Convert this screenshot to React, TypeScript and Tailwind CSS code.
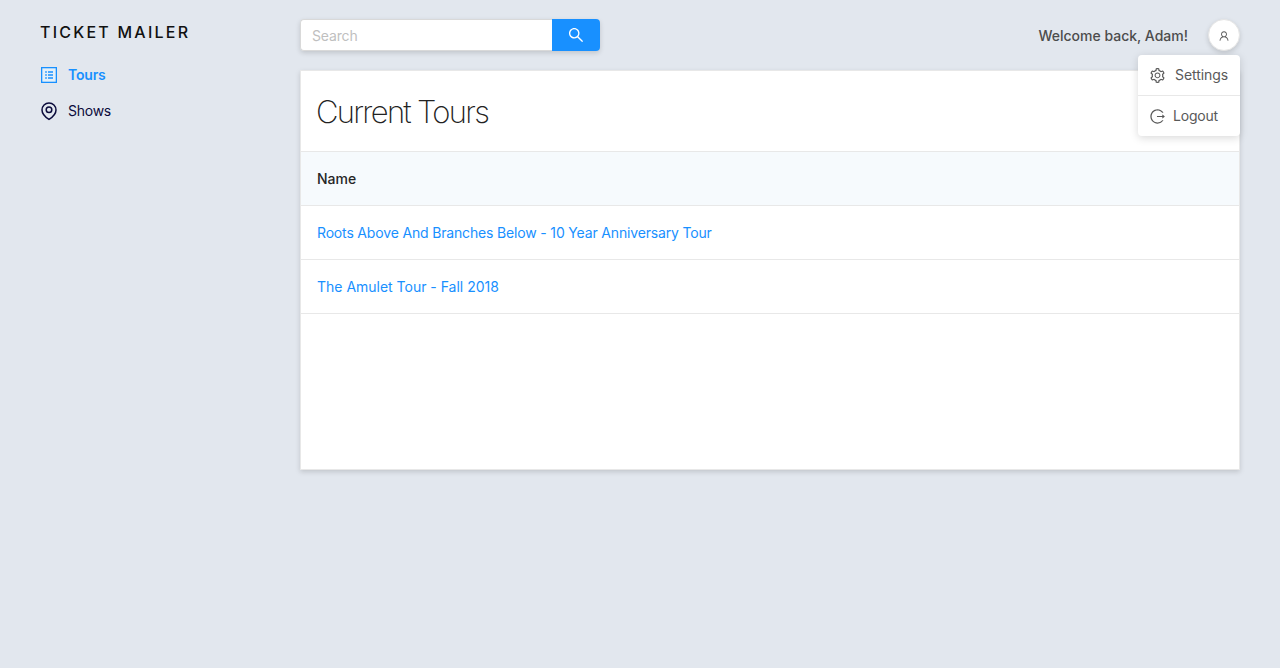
import React from 'react';
import { AiOutlineLogout, AiOutlineSearch, AiOutlineSetting, AiOutlineUser } from 'react-icons/ai';

const tours = [
  { name: 'Roots Above And Branches Below - 10 Year Anniversary Tour', tracking: 'tracking-[-0.165px]' },
  { name: 'The Amulet Tour - Fall 2018', tracking: 'tracking-[-0.01px]' },
];

function ProfileIcon() {
  return (
    <svg width="16" height="16" viewBox="0 0 16 16" fill="none" className="shrink-0">
      <rect x="0.65" y="0.65" width="14.7" height="14.7" fill="#e6f7ff" fillOpacity="0.6" stroke="#1890ff" strokeWidth="1.3" />
      <path d="M7 5h5M7 8h5M7 11h5M4.2 5h1.6M4.2 8h1.6M4.2 11h1.6" stroke="#1890ff" strokeWidth="1.3" />
    </svg>
  );
}

function PinIcon() {
  return (
    <svg width="18" height="20" viewBox="0 0 18 20" fill="none" stroke="#0b0b3b" strokeWidth="1.5" className="shrink-0">
      <path d="M16 8.9C16 13.8 9 18.4 9 18.4S2 13.8 2 8.9a7 7 0 0 1 14 0Z" strokeLinejoin="round" />
      <circle cx="9" cy="8.7" r="2.8" />
    </svg>
  );
}

function Sidebar() {
  return (
    <aside className="w-[300px] shrink-0 pl-10 pt-5">
      <h1 className="h-6 text-[16px] leading-6 font-medium tracking-[2.23px] text-[#111111]">TICKET MAILER</h1>
      <nav className="mt-[13px] text-[14px]">
        <a className="flex h-9 items-center pl-px font-semibold text-[#1890ff]">
          <ProfileIcon />
          <span className="ml-[11px] pb-0.5 tracking-[-0.2px]">Tours</span>
        </a>
        <a className="flex h-9 items-center text-[#0b0b3b]">
          <PinIcon />
          <span className="ml-[10px] pb-0.5 tracking-[-0.25px]">Shows</span>
        </a>
      </nav>
    </aside>
  );
}

function UserMenu() {
  return (
    <div className="absolute top-[36px] right-0 w-[102px] rounded-[4px] bg-white text-[14px] text-[#595959] shadow-[0_2px_8px_rgba(0,0,0,0.15)]">
      <div className="flex h-[41px] items-center border-b border-[#e8e8e8] pl-[11px]">
        <AiOutlineSetting size={17} />
        <span className="ml-[9px] pb-0.5 tracking-[-0.08px]">Settings</span>
      </div>
      <div className="flex h-10 items-center pl-[11px]">
        <AiOutlineLogout size={17} />
        <span className="ml-[7px] pb-0.5 tracking-[-0.2px]">Logout</span>
      </div>
    </div>
  );
}

export default function App() {
  return (
    <div className="flex h-[668px] w-[1280px] bg-[#e2e7ee] font-['Inter',sans-serif]">
      <Sidebar />
      <main className="w-[940px] pt-[19px]">
        <header className="relative flex h-8 items-start justify-between">
          <div className="flex h-8 w-[300px] rounded-[4px] shadow-[0_2px_5px_rgba(0,0,0,0.15)]">
            <div className="flex-1 rounded-l-[4px] border border-r-0 border-[#d9d9d9] bg-white pl-[11px] pt-px text-[14px] leading-[30px] tracking-[-0.15px] text-[#bfbfbf]">
              Search
            </div>
            <button className="flex w-12 items-center justify-center rounded-r-[4px] bg-[#1890ff] text-white">
              <AiOutlineSearch size={18} />
            </button>
          </div>
          <div className="flex items-center">
            <span className="mr-5 text-[14px] font-medium text-[#4c4c4c]">Welcome back, Adam!</span>
            <div className="flex size-8 items-center justify-center rounded-full border border-[#e5e5e5] bg-white pt-0.5 text-[#595959] shadow-[0_2px_5px_rgba(0,0,0,0.15)]">
              <AiOutlineUser size={12} />
            </div>
          </div>
          <UserMenu />
        </header>
        <section className="mt-[19px] h-[400px] border border-[#e8e8e8] bg-white shadow-[0_2px_5px_rgba(0,0,0,0.15)]">
          <h2 className="flex h-[81px] items-center border-b border-[#e8e8e8] pl-[15px] pt-[2px] text-[31px] font-extralight tracking-[-1.7px] text-[#222222]">
            Current Tours
          </h2>
          <div className="flex h-[54px] items-center border-b border-[#e8e8e8] bg-[#f6fafd] pl-4 text-[14px] font-medium text-[#262626]">
            Name
          </div>
          {tours.map((tour) => (
            <div key={tour.name} className="flex h-[54px] items-center border-b border-[#e8e8e8] pl-4 text-[14px] text-[#1890ff]">
              <span className={tour.tracking}>{tour.name}</span>
            </div>
          ))}
        </section>
      </main>
    </div>
  );
}
